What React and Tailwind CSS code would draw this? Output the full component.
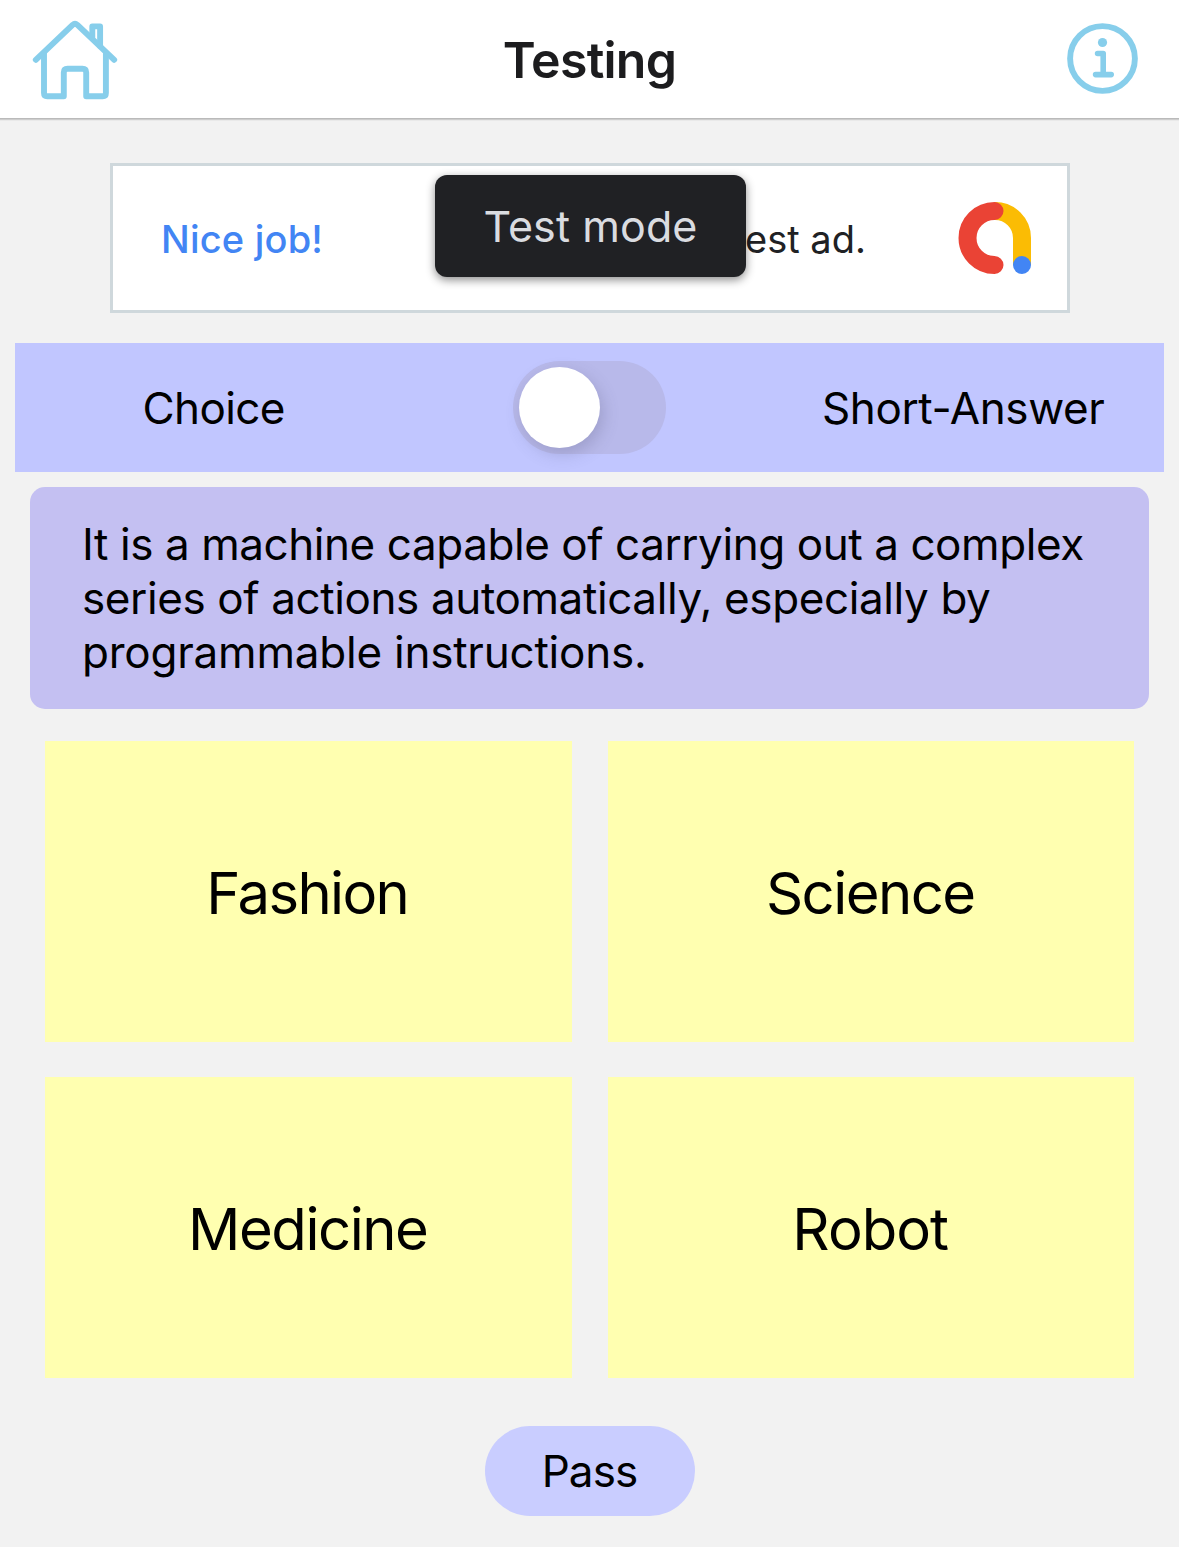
function HomeIcon() {
  return (
    <svg width="90" height="90" viewBox="30 15 90 90" fill="none" stroke="#87ceeb" strokeWidth="5.9" strokeLinecap="round" strokeLinejoin="round">
      <path d="M35.8 59.8 L72.6 24.9 Q75 22.8 77.4 24.9 L114.2 59.8" />
      <path d="M44 53.5 V93 Q44 96.3 47.3 96.3 H63.8 V72.4 Q63.8 68.7 67.5 68.7 H82.5 Q86.2 68.7 86.2 72.4 V96.3 H102.7 Q105.9 96.3 105.9 93 V53.5" />
      <path d="M92.3 37 V26.4 H100.1 V46" />
    </svg>
  );
}

function InfoIcon() {
  return (
    <svg width="80" height="80" viewBox="1063 19 80 80" fill="none" stroke="#87ceeb" strokeLinecap="round" strokeLinejoin="round">
      <circle cx="1102.5" cy="58.5" r="32.4" strokeWidth="5.9" />
      <circle cx="1102.5" cy="42.5" r="4.6" fill="#87ceeb" stroke="none" />
      <path d="M1097.6 53.5 H1103.2 V74.6 M1095.6 74.6 H1111.2" strokeWidth="5.6" />
    </svg>
  );
}

function AdMobLogo() {
  return (
    <svg width="74" height="74" viewBox="958 201 74 74" fill="none" strokeWidth="18">
      <path d="M995 211 A27 27 0 0 1 1022 238 V265" stroke="#fbbc04" />
      <path d="M994.5 211 A27 27 0 0 0 994.5 265" stroke="#ea4335" strokeLinecap="round" />
      <circle cx="1022" cy="265" r="9" fill="#4285f4" />
    </svg>
  );
}

const answers = [
  { label: "Fashion", style: "tracking-[-1.65px] pr-[2px]" },
  { label: "Science", style: "tracking-[-1.55px] pr-[1px]" },
  { label: "Medicine", style: "tracking-[-1.45px] pr-[1px]" },
  { label: "Robot", style: "tracking-[-0.95px] pr-[1px]" },
];

export default function App() {
  return (
    <div className="flex h-[1547px] w-[1179px] flex-col overflow-hidden bg-[#f2f2f2] font-['Inter',sans-serif] text-[44px] text-black">
      <header className="relative flex h-[118px] shrink-0 items-center justify-between bg-white pr-[36px] pl-[30px] shadow-[0_1px_0_#bababa,0_2px_0_#cdcdcd,0_3px_0_#e9e9e9]">
        <div className="mt-[2px] flex w-[200px]">
          <HomeIcon />
        </div>
        <h1 className="mt-[1px] mr-[-6px] text-[50px] leading-none font-semibold tracking-[-0.75px] text-[#1c1c1e]">Testing</h1>
        <div className="flex w-[200px] justify-end">
          <InfoIcon />
        </div>
      </header>

      <section className="relative mr-[109px] ml-[110px] mt-[45px] flex h-[150px] shrink-0 items-center border-[3px] border-[#cfd8dc] bg-white text-[38px] leading-none">
        <span className="mt-[1px] ml-[48px] w-[413px] font-medium tracking-[0.2px] whitespace-nowrap text-[#4285f4]">Nice job!</span>
        <span className="mt-[1px] w-[384px] whitespace-nowrap text-[#202124]">This is a test ad.</span>
        <AdMobLogo />
        <div className="absolute top-[9px] left-[322px] flex h-[102px] w-[311px] items-center justify-center rounded-[12px] bg-[#202124] text-[43px] tracking-[0.1px] text-[#dadce0] shadow-[0_3px_10px_rgba(0,0,0,0.45)]">
          Test mode
        </div>
      </section>

      <section className="mx-[15px] mt-[30px] flex h-[129px] shrink-0 items-center bg-[#c1c6ff]">
        <div className="w-[498px] pl-[127.5px] tracking-[-0.62px]">Choice</div>
        <div className="flex h-[93px] w-[153px] items-center rounded-full bg-[#b8b9ea] pl-[6px]">
          <div className="size-[81px] rounded-full bg-white shadow-[3px_6px_16px_rgba(80,80,110,0.25)]" />
        </div>
        <div className="ml-[156px] tracking-[-0.4px]">Short-Answer</div>
      </section>

      <section className="mx-[30px] mt-[15px] flex h-[222px] shrink-0 flex-col rounded-[15px] bg-[#c4c0f2] py-[30px] pl-[52px] leading-[54px] whitespace-nowrap">
        <span className="tracking-[-0.43px]">It is a machine capable of carrying out a complex</span>
        <span className="tracking-[-0.39px]">series of actions automatically, especially by</span>
        <span className="tracking-[-0.22px]">programmable instructions.</span>
      </section>

      <main className="mx-[45px] mt-[32px] grid shrink-0 grid-cols-2 gap-x-[36px] gap-y-[35px]">
        {answers.map((a) => (
          <button key={a.label} className="flex h-[301px] items-center justify-center bg-[#ffffb0] pt-[2px] text-[58px] leading-none">
            <span className={a.style}>{a.label}</span>
          </button>
        ))}
      </main>

      <button className="mt-[48px] h-[90px] w-[210px] shrink-0 self-center rounded-full bg-[#c9cdff] text-center tracking-[-0.9px]">Pass</button>
    </div>
  );
}
